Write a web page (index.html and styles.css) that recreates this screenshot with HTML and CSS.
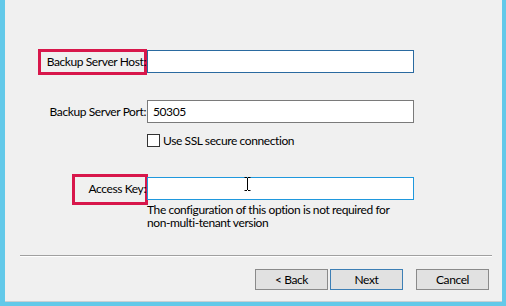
FILE: index.html
```html
<html lang="en">
<head>
    <meta charset="UTF-8">
    <title>Backup Server Setup</title>
    <link rel="stylesheet" href="styles.css">
</head>
<body>
    <div class="window">
        <div class="form">
            <label class="label label-host">Backup Server Host:</label>
            <input type="text" class="field field-focus" value="">

            <label class="label row-port">Backup Server Port:</label>
            <input type="text" class="field row-port" value="50305">

            <div class="check-row">
                <span class="check-box"></span>
                <span>Use SSL secure connection</span>
            </div>

            <label class="label label-key row-key">Access Key:</label>
            <div class="key-cell row-key">
                <input type="text" class="field field-hover" value="">
                <svg class="ibeam" width="7" height="14" viewBox="0 0 7 14">
                    <path d="M0.5 0.5h2.5M4 0.5h2.5M3.5 1v12M0.5 13.5h2.5M4 13.5h2.5" stroke="#000" stroke-width="1" fill="none"/>
                </svg>
            </div>

            <p class="note">The configuration of this option is not required for<br>non-multi-tenant version</p>
        </div>

        <div class="separator"></div>

        <div class="buttons">
            <button class="btn">&lt; Back</button>
            <button class="btn btn-default">Next</button>
            <button class="btn btn-cancel">Cancel</button>
        </div>
    </div>
</body>
</html>
```

FILE: styles.css
```css
body {
    margin: 0;
    background: #63c9e9;
    font-family: Lato, 'Noto Sans', sans-serif;
    font-size: 12px;
    letter-spacing: -0.4px;
    color: #000;
}
.window {
    margin-left: 5px;
    width: 497px;
    height: 301px;
    background: #f0f0f0;
    border-bottom: 1px solid #c9cfd2;
}
.form {
    display: grid;
    grid-template-columns: 142px 267px;
    padding-top: 50px;
}
.label {
    position: relative;
    z-index: 0;
    height: 23px;
    display: flex;
    align-items: center;
    justify-content: flex-end;
    padding-right: 1px;
    white-space: nowrap;
}
.label-host::after,
.label-key::after {
    content: "";
    position: absolute;
    z-index: -1;
    border: 3px solid #d8174b;
}
.label-host::after {
    left: 33px;
    top: -1px;
    right: 0;
    bottom: -2px;
}
.label-key::after {
    left: 67px;
    top: -3px;
    right: -1px;
    bottom: -5px;
}
.field {
    box-sizing: border-box;
    width: 267px;
    height: 23px;
    margin: 0;
    border: 1px solid #7a7a7a;
    background: #fff;
    padding: 0 5px;
    font-family: inherit;
    font-size: 12px;
    letter-spacing: inherit;
    outline: none;
}
.field-focus {
    border-color: #2a6aa0;
}
.field-hover {
    border-color: #1f98dd;
}
.row-port {
    margin-top: 27px;
}
.check-row {
    grid-column: 2;
    display: flex;
    align-items: center;
    gap: 3px;
    height: 13px;
    margin-top: 11px;
}
.check-box {
    box-sizing: border-box;
    width: 13px;
    height: 13px;
    border: 1px solid #333;
    background: #fff;
}
.row-key {
    margin-top: 30px;
}
.key-cell {
    position: relative;
}
.ibeam {
    position: absolute;
    left: 97px;
    top: 0;
}
.note {
    grid-column: 2;
    margin: 3px 0 0;
    line-height: 13px;
    white-space: nowrap;
}
.separator {
    margin: 26px 10px 0 15px;
    height: 1px;
    background: #a0a0a0;
    border-bottom: 1px solid #fff;
}
.buttons {
    display: flex;
    justify-content: flex-end;
    padding-right: 13px;
    margin-top: 12px;
}
.btn {
    width: 73px;
    height: 21px;
    margin: 0;
    padding: 0;
    background: #e1e1e1;
    border: 1px solid #8a8a8a;
    font-family: inherit;
    font-size: 12px;
    letter-spacing: inherit;
    color: #000;
}
.btn-default {
    margin-left: 2px;
    border-color: #3d7fb5;
}
.btn-cancel {
    margin-left: 13px;
}
```
